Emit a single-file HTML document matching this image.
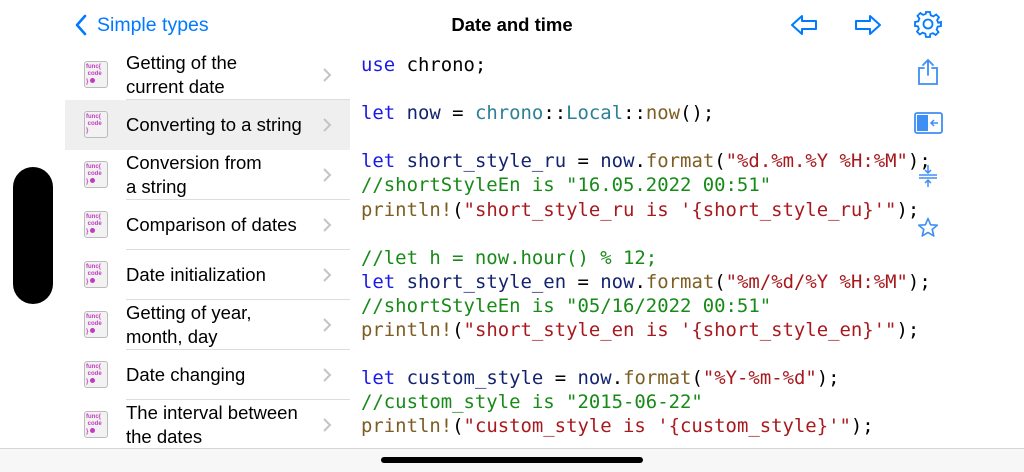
<!DOCTYPE html>
<html><head><meta charset="utf-8"><style>
*{margin:0;padding:0;box-sizing:border-box}
body{width:1024px;height:472px;background:#fff;position:relative;overflow:hidden;font-family:"Liberation Sans",sans-serif}
.abs{position:absolute}
.back{color:#007aff;font-size:19.5px;}
.title{left:0;width:1024px;top:14px;text-align:center;font-weight:bold;font-size:18.5px;color:#000}
.pill{left:13px;top:167px;width:40px;height:137px;background:#000;border-radius:20px}
.row{position:absolute;left:65px;width:285px;height:50px}
.row.sel{background:#efeff0}
.row .t{position:absolute;left:61px;top:0;height:49px;display:flex;align-items:center;font-size:18.5px;line-height:24px;color:#000}
.row .sep{position:absolute;left:61px;right:0;bottom:0;height:1px;background:#ddd}
.row .ch{position:absolute;left:257px;top:17px}
.ic{position:absolute;left:19px;top:11px;width:24px;height:27px;background:#f2f2f2;border:1px solid #bbb;border-radius:3px;font-size:6px;line-height:7px;color:#c03cc0;font-family:"Liberation Sans",sans-serif;font-weight:bold;padding:2px 1px}
.ic i{display:inline-block;width:5px;height:5px;border-radius:50%;background:#c03cc0}
.code{left:361px;top:53px;font-family:"DejaVu Sans Mono",monospace;font-size:18.93px;line-height:24.1px;white-space:pre;color:#000}
.k{color:#1a1ae6}.v{color:#14236e}.m{color:#2c7f95}.f{color:#7d5d22}.s{color:#a8191e}.c{color:#178a17}
.bot{left:0;top:448px;width:1024px;height:24px;background:#f7f7f7;border-top:1px solid #d6d6d6}
.home{left:381px;top:457px;width:262px;height:6px;border-radius:3px;background:#000}
</style></head><body>
<svg class="abs" style="left:74px;top:14px" width="14" height="22" viewBox="0 0 14 22"><path d="M11 2 L3 11 L11 20" stroke="#007aff" stroke-width="2.6" fill="none" stroke-linecap="round" stroke-linejoin="round"/></svg>
<div class="abs back" style="left:97px;top:14px">Simple types</div>
<div class="abs title">Date and time</div>
<svg class="abs" style="left:790px;top:14px" width="28" height="22" viewBox="0 0 28 22"><path d="M2 11 L12 2 V7 H26 V15 H12 V20 Z" stroke="#007aff" stroke-width="2" fill="none" stroke-linejoin="round"/></svg>
<svg class="abs" style="left:854px;top:14px" width="28" height="22" viewBox="0 0 28 22"><path d="M26 11 L16 2 V7 H2 V15 H16 V20 Z" stroke="#007aff" stroke-width="2" fill="none" stroke-linejoin="round"/></svg>
<svg class="abs" style="left:914px;top:10px" width="28" height="28" viewBox="0 0 28 28"><g stroke="#007aff" stroke-width="1.8" fill="none"><circle cx="14" cy="14" r="4.5"/><path d="M12 2h4l.7 3.3 2.7 1.1 2.8-1.9 2.8 2.8-1.9 2.8 1.1 2.7L27 12v4l-3.3.7-1.1 2.7 1.9 2.8-2.8 2.8-2.8-1.9-2.7 1.1L16 27h-4l-.7-3.3-2.7-1.1-2.8 1.9-2.8-2.8 1.9-2.8-1.1-2.7L1 16v-4l3.300-.7 1.1-2.7-1.900-2.8 2.8-2.8 2.8 1.9 2.7-1.100Z"/></g></svg>
<svg class="abs" style="left:917px;top:58px" width="22" height="28" viewBox="0 0 22 28"><g stroke="#3d8ef5" stroke-width="1.8" fill="none" stroke-linecap="round"><path d="M7 10H2V26H20V10H15"/><path d="M11 2V17M6 7L11 2L16 7"/></g></svg>
<svg class="abs" style="left:914px;top:112px" width="29" height="22" viewBox="0 0 29 22"><rect x="1" y="1" width="27" height="20" rx="2" stroke="#3d8ef5" stroke-width="1.8" fill="none"/><rect x="3" y="3" width="11" height="16" fill="#3d8ef5"/><path d="M24 11H17M20 8L17 11L20 14" stroke="#3d8ef5" stroke-width="1.5" fill="none"/></svg>
<svg class="abs" style="left:918px;top:165px" width="20" height="22" viewBox="0 0 20 22"><g stroke="#3d8ef5" stroke-width="1.5" fill="none"><path d="M10 0V8M7 5L10 8L13 5M1 10H19M1 13H19M10 22V15M7 18L10 15L13 18"/></g></svg>
<svg class="abs" style="left:917px;top:217px" width="22" height="21" viewBox="0 0 22 21"><path d="M11 1.5L13.6 7.8 20.3 8.2 15.2 12.5 16.8 19 11 15.4 5.2 19 6.8 12.5 1.7 8.2 8.4 7.8Z" stroke="#3d8ef5" stroke-width="1.6" fill="none" stroke-linejoin="round"/></svg>
<div class="abs pill"></div>

<div class="row" style="top:50px"><div class="ic">func{<br>&nbsp;code<br>} <i></i></div><div class="t">Getting of the<br>current date</div><svg class="ch" width="10" height="16"><path d="M2 2L8 8L2 14" stroke="#c4c4c7" stroke-width="2" fill="none"/></svg><div class="sep"></div></div>
<div class="row sel" style="top:100px"><div class="ic">func{<br>&nbsp;code<br>}</div><div class="t">Converting to a string</div><svg class="ch" width="10" height="16"><path d="M2 2L8 8L2 14" stroke="#c4c4c7" stroke-width="2" fill="none"/></svg></div>
<div class="row" style="top:150px"><div class="ic">func{<br>&nbsp;code<br>} <i></i></div><div class="t">Conversion from<br>a string</div><svg class="ch" width="10" height="16"><path d="M2 2L8 8L2 14" stroke="#c4c4c7" stroke-width="2" fill="none"/></svg><div class="sep"></div></div>
<div class="row" style="top:200px"><div class="ic">func{<br>&nbsp;code<br>} <i></i></div><div class="t">Comparison of dates</div><svg class="ch" width="10" height="16"><path d="M2 2L8 8L2 14" stroke="#c4c4c7" stroke-width="2" fill="none"/></svg><div class="sep"></div></div>
<div class="row" style="top:250px"><div class="ic">func{<br>&nbsp;code<br>} <i></i></div><div class="t">Date initialization</div><svg class="ch" width="10" height="16"><path d="M2 2L8 8L2 14" stroke="#c4c4c7" stroke-width="2" fill="none"/></svg><div class="sep"></div></div>
<div class="row" style="top:300px"><div class="ic">func{<br>&nbsp;code<br>} <i></i></div><div class="t">Getting of year,<br>month, day</div><svg class="ch" width="10" height="16"><path d="M2 2L8 8L2 14" stroke="#c4c4c7" stroke-width="2" fill="none"/></svg><div class="sep"></div></div>
<div class="row" style="top:350px"><div class="ic">func{<br>&nbsp;code<br>} <i></i></div><div class="t">Date changing</div><svg class="ch" width="10" height="16"><path d="M2 2L8 8L2 14" stroke="#c4c4c7" stroke-width="2" fill="none"/></svg><div class="sep"></div></div>
<div class="row" style="top:400px"><div class="ic">func{<br>&nbsp;code<br>} <i></i></div><div class="t">The interval between<br>the dates</div><svg class="ch" width="10" height="16"><path d="M2 2L8 8L2 14" stroke="#c4c4c7" stroke-width="2" fill="none"/></svg></div>

<div class="abs code"><span class="k">use</span> chrono;

<span class="k">let</span> <span class="v">now</span> = <span class="m">chrono</span>::<span class="m">Local</span>::<span class="f">now</span>();

<span class="k">let</span> <span class="v">short_style_ru</span> = <span class="v">now</span>.<span class="f">format</span>(<span class="s">"%d.%m.%Y %H:%M"</span>);
<span class="c">//shortStyleEn is "16.05.2022 00:51"</span>
<span class="f">println!</span>(<span class="s">"short_style_ru is '{short_style_ru}'"</span>);

<span class="c">//let h = now.hour() % 12;</span>
<span class="k">let</span> <span class="v">short_style_en</span> = <span class="v">now</span>.<span class="f">format</span>(<span class="s">"%m/%d/%Y %H:%M"</span>);
<span class="c">//shortStyleEn is "05/16/2022 00:51"</span>
<span class="f">println!</span>(<span class="s">"short_style_en is '{short_style_en}'"</span>);

<span class="k">let</span> <span class="v">custom_style</span> = <span class="v">now</span>.<span class="f">format</span>(<span class="s">"%Y-%m-%d"</span>);
<span class="c">//custom_style is "2015-06-22"</span>
<span class="f">println!</span>(<span class="s">"custom_style is '{custom_style}'"</span>);</div>
<div class="abs bot"></div>
<div class="abs home"></div>
</body></html>
